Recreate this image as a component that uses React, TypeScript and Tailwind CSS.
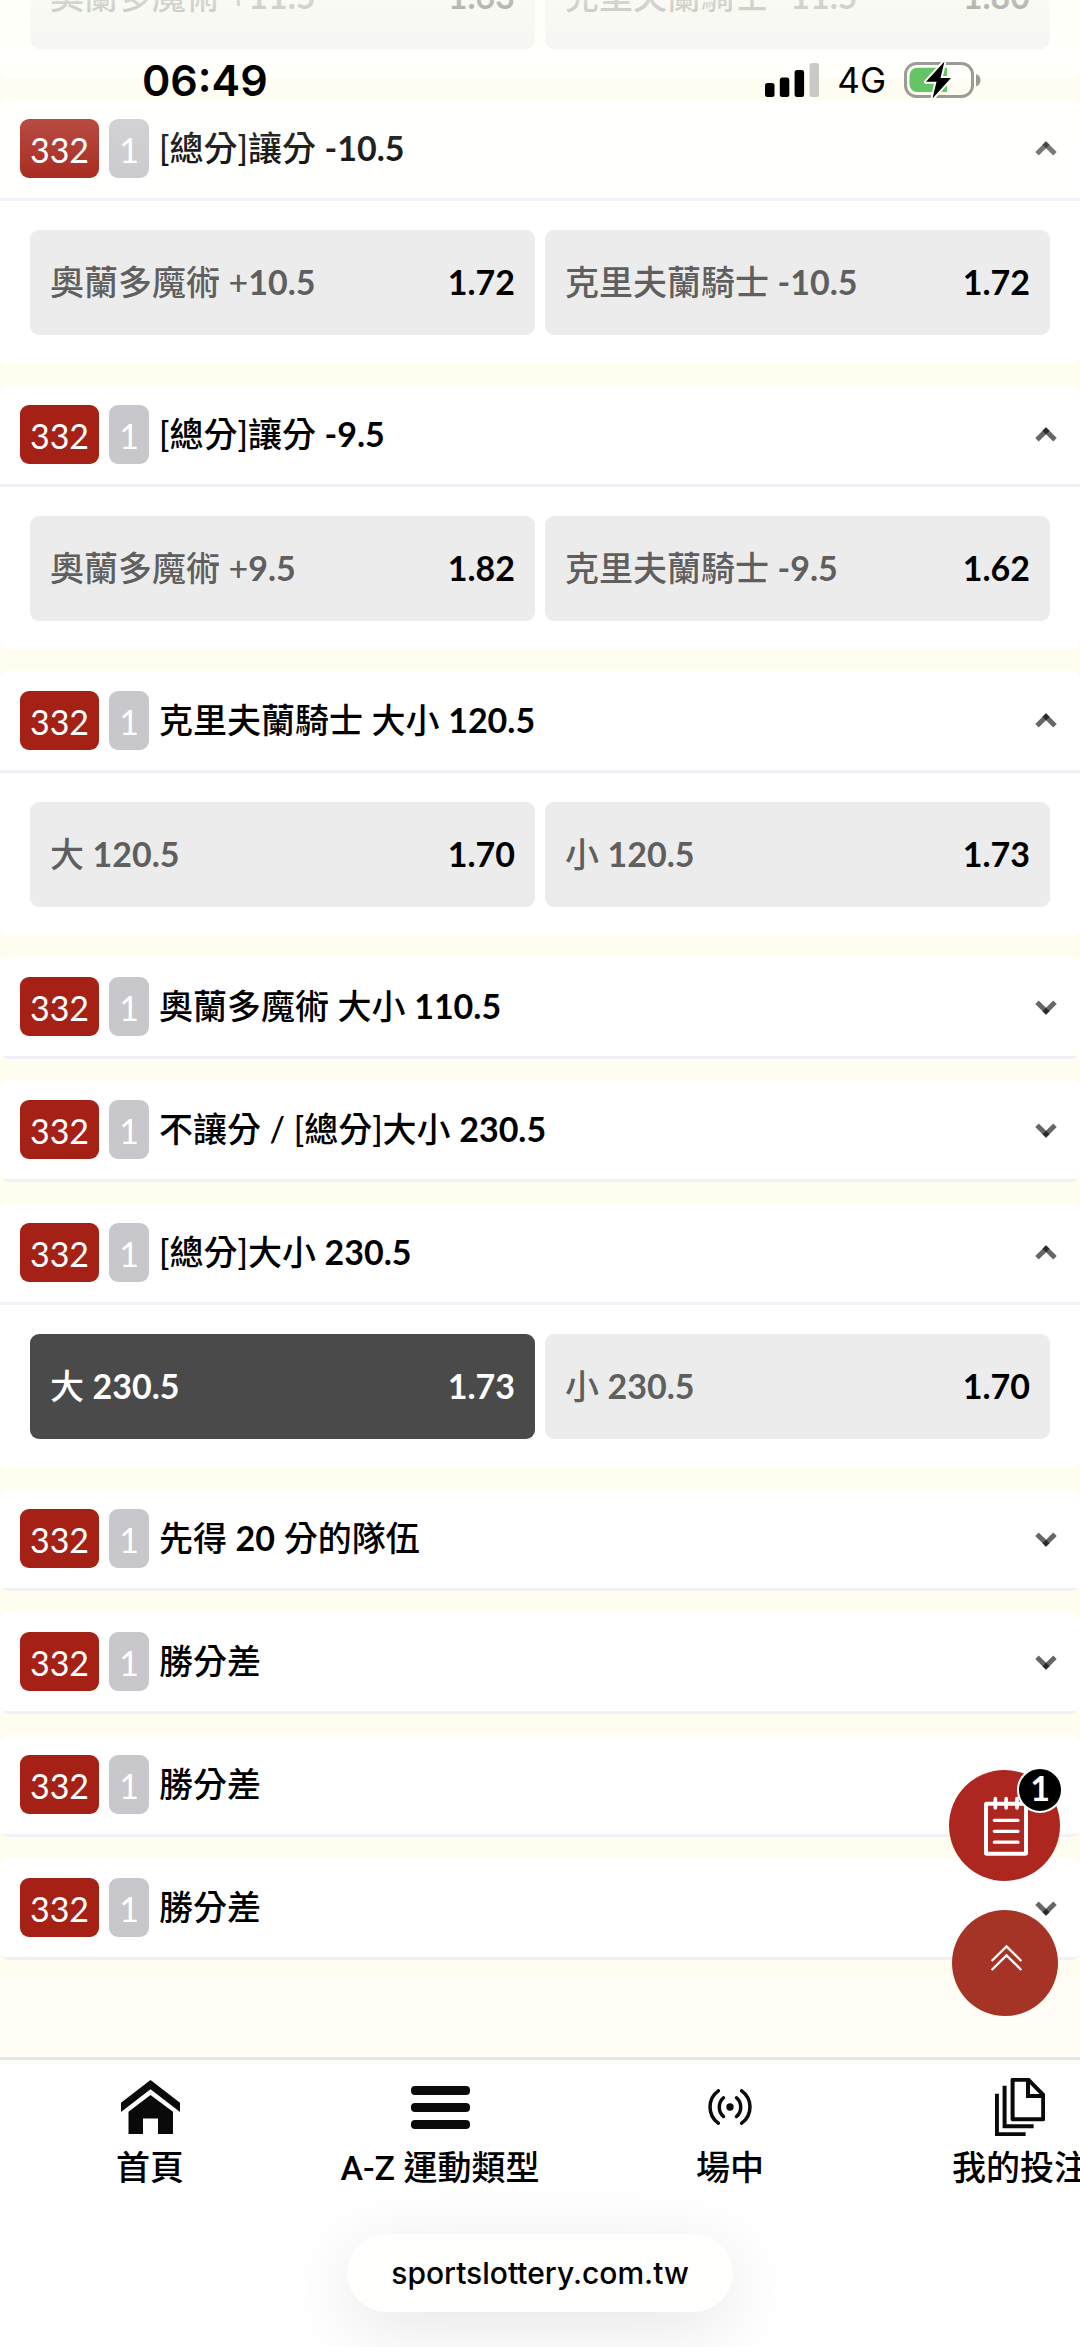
import clsx from 'clsx';
import { useState } from 'react';

type Option = { label: string; odds: string };
type Market = { id: number; title: string; options: [Option, Option]; open: boolean };

const initialMarkets: Market[] = [
  {
    id: 1,
    title: '[總分]讓分 -11.5',
    options: [{ label: '奧蘭多魔術 +11.5', odds: '1.63' }, { label: '克里夫蘭騎士 -11.5', odds: '1.80' }],
    open: true,
  },
  {
    id: 2,
    title: '[總分]讓分 -10.5',
    options: [{ label: '奧蘭多魔術 +10.5', odds: '1.72' }, { label: '克里夫蘭騎士 -10.5', odds: '1.72' }],
    open: true,
  },
  {
    id: 3,
    title: '[總分]讓分 -9.5',
    options: [{ label: '奧蘭多魔術 +9.5', odds: '1.82' }, { label: '克里夫蘭騎士 -9.5', odds: '1.62' }],
    open: true,
  },
  {
    id: 4,
    title: '克里夫蘭騎士 大小 120.5',
    options: [{ label: '大 120.5', odds: '1.70' }, { label: '小 120.5', odds: '1.73' }],
    open: true,
  },
  {
    id: 5,
    title: '奧蘭多魔術 大小 110.5',
    options: [{ label: '大 110.5', odds: '1.70' }, { label: '小 110.5', odds: '1.73' }],
    open: false,
  },
  {
    id: 6,
    title: '不讓分 / [總分]大小 230.5',
    options: [{ label: '大 230.5', odds: '1.73' }, { label: '小 230.5', odds: '1.70' }],
    open: false,
  },
  {
    id: 7,
    title: '[總分]大小 230.5',
    options: [{ label: '大 230.5', odds: '1.73' }, { label: '小 230.5', odds: '1.70' }],
    open: true,
  },
  {
    id: 8,
    title: '先得 20 分的隊伍',
    options: [{ label: '奧蘭多魔術', odds: '1.90' }, { label: '克里夫蘭騎士', odds: '1.55' }],
    open: false,
  },
  {
    id: 9,
    title: '勝分差',
    options: [{ label: '奧蘭多魔術', odds: '2.50' }, { label: '克里夫蘭騎士', odds: '1.30' }],
    open: false,
  },
  {
    id: 10,
    title: '勝分差',
    options: [{ label: '奧蘭多魔術', odds: '2.50' }, { label: '克里夫蘭騎士', odds: '1.30' }],
    open: false,
  },
  {
    id: 11,
    title: '勝分差',
    options: [{ label: '奧蘭多魔術', odds: '2.50' }, { label: '克里夫蘭騎士', odds: '1.30' }],
    open: false,
  },
];

// numbers are set bolder than the Chinese text around them
function MarketText({ text }: { text: string }) {
  return (
    <>
      {text.split(/([-\d.]+)/).map((part, i) =>
        i % 2 === 1 ? <span key={i} className="font-bold">{part}</span> : part,
      )}
    </>
  );
}

function Chevron({ up }: { up: boolean }) {
  return (
    <svg viewBox="0 0 22 16" className="h-4 w-[22px]" stroke="#000" strokeOpacity="0.6" strokeWidth="5" aria-hidden="true">
      {up ? (
        <>
          <path d="M2 12.800 12.800 2" />
          <path d="M20 12.800 9.200 2" />
        </>
      ) : (
        <>
          <path d="M2 3.200 12.800 14" />
          <path d="M20 3.200 9.200 14" />
        </>
      )}
    </svg>
  );
}

function MarketCard({ market, selected, onToggle, onSelect }: {
  market: Market;
  selected: string;
  onToggle: () => void;
  onSelect: (key: string) => void;
}) {
  return (
    <section className="shrink-0 overflow-hidden rounded-[9px] bg-white">
      <button
        onClick={onToggle}
        aria-expanded={market.open}
        className="flex w-full items-center gap-[10px] border-b-[3px] border-[#f0f0f6] py-5 pr-[23px] pl-5 text-left"
      >
        <span className="flex h-[59px] w-[79px] items-center justify-center rounded-[9px] bg-[#a52015] pt-0.5 text-[34px] leading-none text-white">
          332
        </span>
        <span className="flex h-[59px] w-10 items-center justify-center rounded-[9px] bg-[#c8c7cc] pt-0.5 text-[34px] leading-none text-white">
          1
        </span>
        <span className="flex-1 pb-0.5 text-[34px] leading-[48px] font-medium text-black">
          <MarketText text={market.title} />
        </span>
        <Chevron up={market.open} />
      </button>
      {market.open && (
        <div className="grid grid-cols-2 gap-[10px] px-[30px] py-[29px]">
          {market.options.map((option, i) => {
            const key = `${market.id}-${i}`;
            const active = key === selected;
            return (
              <button
                key={key}
                onClick={() => onSelect(key)}
                aria-pressed={active}
                className={clsx(
                  'flex h-[105px] items-center justify-between rounded-[9px] px-5 pb-0.5 text-[34px] leading-[48px] font-medium',
                  active ? 'bg-[#4a4a4a] text-white' : 'bg-[#ececec] text-[#5f5f5f]',
                )}
              >
                <span><MarketText text={option.label} /></span>
                <span className={clsx('font-bold', active ? 'text-white' : 'text-black')}>{option.odds}</span>
              </button>
            );
          })}
        </div>
      )}
    </section>
  );
}

function StatusBar() {
  return (
    <div className="pointer-events-none absolute inset-x-0 top-0 flex h-[200px] items-start justify-between bg-linear-to-b from-[#fffff8]/75 via-[#fffff8]/22 via-55% to-transparent pt-[62px] pr-[99px] pl-[142px] font-['Inter',sans-serif] text-black">
      <span className="text-[43px] leading-9 font-semibold">06:49</span>
      <div className="flex items-center gap-[18px]">
        <svg viewBox="0 0 54 36" className="h-9 w-[54px]" aria-hidden="true">
          <rect x="0" y="21" width="9.5" height="14" rx="2.5" />
          <rect x="14.8" y="15.5" width="9.5" height="19.5" rx="2.5" />
          <rect x="29.6" y="8" width="9.5" height="27" rx="2.5" />
          <rect x="44.5" y="1" width="9.5" height="34" rx="2.5" fill="#c9c9c5" />
        </svg>
        <span className="text-[35px] leading-9">4G</span>
        <svg viewBox="0 0 77 36" className="h-9 w-[77px]" aria-hidden="true">
          <rect x="1.5" y="1.5" width="67" height="33" rx="11" fill="none" stroke="#9b9b97" strokeWidth="3" />
          <path d="M72 12q4.500 1.500 4.500 6.200t-4.500 6.200z" fill="#9b9b97" />
          <path d="M13 5.800H43V30H13a7.500 7.500 0 0 1-7.500-7.500V13.300A7.500 7.500 0 0 1 13 5.800z" fill="#65c466" />
          <path
            d="M40.500-.5 22 19.800H32.500L28.500 36.500 47 16H36.500z"
            fill="#000"
            stroke="#fffff8"
            strokeWidth="4"
            paintOrder="stroke"
            strokeLinejoin="round"
          />
        </svg>
      </div>
    </div>
  );
}

function FloatingButtons() {
  return (
    <div className="absolute right-5 bottom-[41px] flex flex-col items-center gap-[29px]">
      <button aria-label="投注單" className="relative flex size-[111px] items-center justify-center rounded-full bg-[#ad2620]">
        <svg viewBox="300 157 150 198" className="h-[66px] w-[50px]" fill="none" stroke="#fff" aria-hidden="true">
          <rect x="318" y="189" width="120" height="150" rx="2" strokeWidth="12" />
          <path d="M346 174v28M378.500 174v28M411 174v28" strokeWidth="11" strokeLinecap="round" />
          <path d="M343 239h71M343 272h71M343 304.500h71" strokeWidth="10" strokeLinecap="round" />
        </svg>
        <span className="absolute -top-[3px] -right-[3px] flex size-[46px] items-center justify-center rounded-full border-2 border-white bg-black pb-1 text-[34px] leading-none font-bold text-white">
          1
        </span>
      </button>
      <button aria-label="回到頂部" className="flex size-[106px] items-center justify-center rounded-full bg-[#a63426] pb-2">
        <svg viewBox="315 608 120 120" className="size-10" fill="none" stroke="#fff" strokeWidth="7" aria-hidden="true">
          <path d="M335 674 379.500 630 424 674M335 701 379.500 657 424 701" />
        </svg>
      </button>
    </div>
  );
}

const navItems = [
  {
    label: '首頁',
    icon: (
      <svg viewBox="0 0 59 54" className="h-[54px] w-[59px]" fill="#0a0a0a" aria-hidden="true">
        <path d="M29.500 0 59 22.700V32L29.500 9.300 0 32v-9.300z" />
        <path d="M29.500 15 52 31.700V54H37V38.500H22V54H7.500V31.700z" />
      </svg>
    ),
  },
  {
    label: 'A-Z 運動類型',
    icon: (
      <svg viewBox="0 0 59 43" className="h-[43px] w-[59px]" fill="#0a0a0a" aria-hidden="true">
        <rect width="59" height="9" rx="4" />
        <rect y="17" width="59" height="9" rx="4" />
        <rect y="34" width="59" height="9" rx="4" />
      </svg>
    ),
  },
  {
    label: '場中',
    icon: (
      <svg viewBox="0 0 44 36" className="h-9 w-11" fill="none" stroke="#0a0a0a" strokeWidth="3.5" strokeLinecap="round" aria-hidden="true">
        <path d="M10.300 1.800A20 20 0 0 0 10.300 34.200M33.700 1.800A20 20 0 0 1 33.700 34.200" />
        <path d="M15.500 8.800A12.500 12.500 0 0 0 15.500 27.500M28.500 8.800A12.500 12.500 0 0 1 28.500 27.500" />
        <circle cx="22" cy="18" r="3.7" fill="#0a0a0a" stroke="none" />
      </svg>
    ),
  },
  {
    label: '我的投注',
    icon: (
      <svg viewBox="0 0 50 58" className="h-[58px] w-[50px]" fill="none" stroke="#0a0a0a" strokeWidth="4" aria-hidden="true">
        <path d="M17.600 1.800H33.500L48.200 16.800V41.200H17.600z" strokeLinejoin="round" />
        <path d="M33 1.800V18H48.200" />
        <path d="M9.600 7.700V48.300H38.600M1.900 15.700V56.200H30.600" />
      </svg>
    ),
  },
];

export default function App() {
  const [markets, setMarkets] = useState(initialMarkets);
  const [selected, setSelected] = useState('7-0');

  const toggle = (id: number) =>
    setMarkets((list) => list.map((m) => (m.id === id ? { ...m, open: !m.open } : m)));

  return (
    <div className="flex h-screen flex-col overflow-hidden bg-[#fffcf0] font-['Lato','Noto_Sans_CJK_TC',sans-serif]">
      <div className="relative flex min-h-0 flex-1 flex-col">
        <main className="flex min-h-0 flex-1 flex-col justify-end gap-[21px] overflow-hidden pb-[97px]">
          {markets.map((market) => (
            <MarketCard
              key={market.id}
              market={market}
              selected={selected}
              onToggle={() => toggle(market.id)}
              onSelect={setSelected}
            />
          ))}
        </main>
        <div className="pointer-events-none absolute inset-x-0 bottom-0 h-20 bg-white/40" />
        <StatusBar />
        <FloatingButtons />
      </div>

      <footer className="overflow-hidden border-t-[3px] border-[#e6e6e4] bg-white pt-[18px] pb-[35px]">
        <nav className="flex pl-[5px]">
          {navItems.map((item) => (
            <a key={item.label} href="#" className="flex w-[290px] shrink-0 flex-col items-center gap-2 text-black">
              <span className="flex h-[58px] items-center">{item.icon}</span>
              <span className="font-['Roboto','Noto_Sans_CJK_TC',sans-serif] text-[34px] leading-[48px] font-medium whitespace-nowrap">
                {item.label}
              </span>
            </a>
          ))}
        </nav>
        <div className="mt-[42px] flex justify-center">
          <button className="h-[78px] rounded-full bg-[#fefefd] px-11 font-['Inter',sans-serif] text-[30px] font-medium text-black shadow-[0_16px_72px_rgba(0,0,0,0.1)]">
            sportslottery.com.tw
          </button>
        </div>
      </footer>
    </div>
  );
}
